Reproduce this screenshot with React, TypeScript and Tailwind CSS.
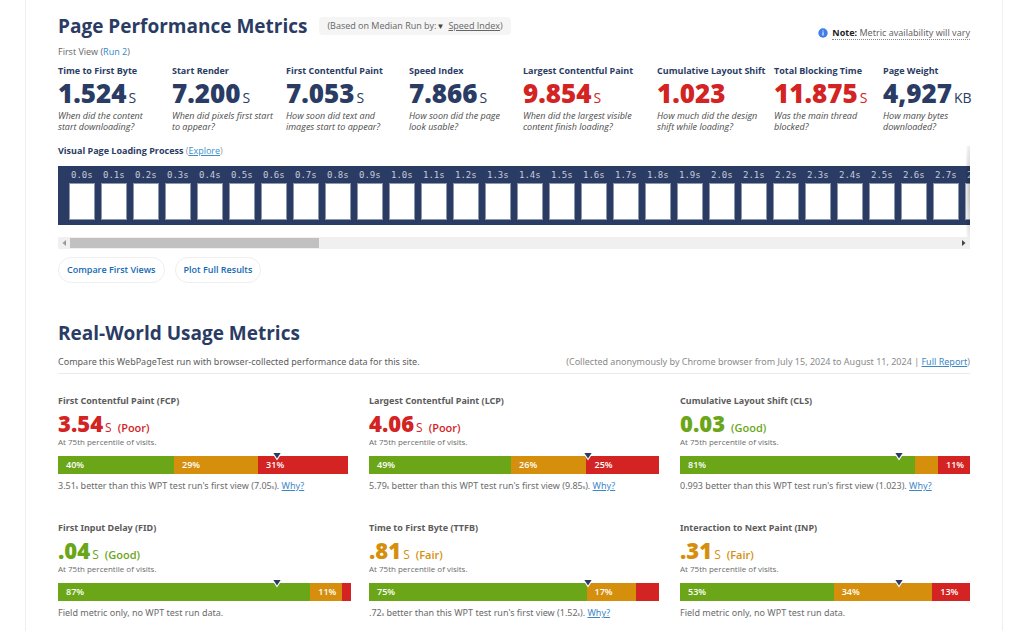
import React from "react";

type Tone = "navy" | "good" | "fair" | "poor";

const toneText: Record<Tone, string> = {
  navy: "text-[#2a3c64]",
  good: "text-[#6aa618]",
  fair: "text-[#d58f0c]",
  poor: "text-[#d32323]",
};

interface Metric {
  label: string;
  value: string;
  unit?: string;
  tone: Tone;
  lines: [string, string];
}

const metrics: Metric[] = [
  { label: "Time to First Byte", value: "1.524", unit: "S", tone: "navy", lines: ["When did the content", "start downloading?"] },
  { label: "Start Render", value: "7.200", unit: "S", tone: "navy", lines: ["When did pixels first start", "to appear?"] },
  { label: "First Contentful Paint", value: "7.053", unit: "S", tone: "navy", lines: ["How soon did text and", "images start to appear?"] },
  { label: "Speed Index", value: "7.866", unit: "S", tone: "navy", lines: ["How soon did the page", "look usable?"] },
  { label: "Largest Contentful Paint", value: "9.854", unit: "S", tone: "poor", lines: ["When did the largest visible", "content finish loading?"] },
  { label: "Cumulative Layout Shift", value: "1.023", tone: "poor", lines: ["How much did the design", "shift while loading?"] },
  { label: "Total Blocking Time", value: "11.875", unit: "S", tone: "poor", lines: ["Was the main thread", "blocked?"] },
  { label: "Page Weight", value: "4,927", unit: "KB", tone: "navy", lines: ["How many bytes", "downloaded?"] },
];

const frames = Array.from({ length: 29 }, (_, i) => `${(i / 10).toFixed(1)}s`);

interface FieldMetric {
  title: string;
  value: string;
  unit?: string;
  rating: string;
  tone: Tone;
  split: [number, number, number];
  compare?: { diff: string; first: string; unit: boolean };
}

const fieldMetrics: FieldMetric[] = [
  { title: "First Contentful Paint (FCP)", value: "3.54", unit: "S", rating: "Poor", tone: "poor", split: [40, 29, 31], compare: { diff: "3.51", first: "7.05", unit: true } },
  { title: "Largest Contentful Paint (LCP)", value: "4.06", unit: "S", rating: "Poor", tone: "poor", split: [49, 26, 25], compare: { diff: "5.79", first: "9.85", unit: true } },
  { title: "Cumulative Layout Shift (CLS)", value: "0.03", rating: "Good", tone: "good", split: [81, 8, 11], compare: { diff: "0.993", first: "1.023", unit: false } },
  { title: "First Input Delay (FID)", value: ".04", unit: "S", rating: "Good", tone: "good", split: [87, 11, 3] },
  { title: "Time to First Byte (TTFB)", value: ".81", unit: "S", rating: "Fair", tone: "fair", split: [75, 17, 8], compare: { diff: ".72", first: "1.52", unit: true } },
  { title: "Interaction to Next Paint (INP)", value: ".31", unit: "S", rating: "Fair", tone: "fair", split: [53, 34, 13] },
];

const segmentColors = ["bg-[#6aa618]", "bg-[#d58f0c]", "bg-[#d32323]"];

function MetricCell({ metric }: { metric: Metric }) {
  return (
    <div className="min-w-0 whitespace-nowrap">
      <h3 className="text-[9px] leading-3 font-bold text-[#2a3c64]">{metric.label}</h3>
      <p className={`mt-0.5 text-[26px] leading-7 font-extrabold ${toneText[metric.tone]}`}>
        {metric.value}
        {metric.unit && <span className="ml-0.5 text-sm leading-none font-medium">{metric.unit}</span>}
      </p>
      <p className="mt-[3px] text-[9px] leading-[11px] text-[#4b4b4b] italic">
        {metric.lines[0]}
        <br />
        {metric.lines[1]}
      </p>
    </div>
  );
}

function FieldCard({ item }: { item: FieldMetric }) {
  const small = <span className="text-[5px]">s</span>;
  return (
    <section className="min-w-0 whitespace-nowrap">
      <h3 className="font-['Noto_Sans',sans-serif] text-[9px] leading-[14px] font-bold text-[#5c5c5c]">{item.title}</h3>
      <p className={`mt-0.5 text-[22px] leading-[26px] font-extrabold ${toneText[item.tone]}`}>
        {item.value}
        {item.unit && <span className="ml-0.5 text-xs leading-none font-medium">{item.unit}</span>}
        <span className="ml-1.5 text-[11px] leading-none font-semibold">({item.rating})</span>
      </p>
      <p className="text-[8px] leading-3 text-[#6b6b6b]">At 75th percentile of visits.</p>
      <div className="relative mt-2 flex h-[18px]">
        {item.split.map((pct, i) => (
          <div
            key={i}
            className={`shrink-0 text-[9px] leading-[18px] font-semibold text-white ${pct > 10 ? "px-2" : ""} ${segmentColors[i]}`}
            style={{ width: `${pct}%` }}
          >
            {pct > 10 ? `${pct}%` : ""}
          </div>
        ))}
        <svg className="absolute -top-[3px] left-3/4 -ml-1 h-2 w-2.5" viewBox="0 0 10 8" aria-hidden="true">
          <path d="M0 0H10L5 7.6Z" fill="#fff" />
          <path d="M1.4 0H8.6L5 5.6Z" fill="#2a3c64" />
        </svg>
      </div>
      <p className="mt-1 font-['Noto_Sans',sans-serif] text-[9px] leading-4 text-[#6b6b6b]">
        {item.compare ? (
          <>
            {item.compare.diff}
            {item.compare.unit && small} better than this WPT test run's first view ({item.compare.first}
            {item.compare.unit && small}).{" "}
            <a href="#why" className="text-[#3b87c8] underline">Why?</a>
          </>
        ) : (
          "Field metric only, no WPT test run data."
        )}
      </p>
    </section>
  );
}

export default function App() {
  return (
    <div className="overflow-hidden bg-white font-['Open_Sans',sans-serif]">
      <main className="mr-[21px] ml-[25px] border-x border-[#efefef] px-8 pt-3.5 pb-3">
        <header className="flex h-6 items-center">
          <h1 className="text-[19px] leading-6 font-bold whitespace-nowrap text-[#2a3c64]">Page Performance Metrics</h1>
          <div className="ml-3 flex h-[18px] items-center rounded bg-[#f5f5f5] px-2 text-[9px] whitespace-nowrap text-[#666]">
            (Based on Median Run by:
            <span className="mr-1 text-[8px] text-[#444]">▼</span>
            <a href="#speed-index" className="underline">Speed Index</a>)
          </div>
          <p className="mt-3.5 ml-auto flex items-center gap-1 font-['Noto_Sans',sans-serif] text-[9px] leading-3 whitespace-nowrap text-[#666]">
            <svg className="h-2.5 w-2.5" viewBox="0 0 10 10" aria-hidden="true">
              <circle cx="5" cy="5" r="4.7" fill="#3f7fe8" />
              <path d="M5 4.3V7.6M5 2.4V3.4" stroke="#fff" strokeWidth="1.1" />
            </svg>
            <span className="border-b border-dotted border-[#888]">
              <strong className="text-[#222]">Note:</strong> Metric availability will vary
            </span>
          </p>
        </header>
        <p className="mt-[7px] text-[9px] leading-[14px] text-[#666]">
          First View (<a href="#run2" className="text-[#2f88cc]">Run 2</a>)
        </p>

        <div className="mt-1.5 grid grid-cols-[minmax(0,114fr)_minmax(0,114fr)_minmax(0,123fr)_minmax(0,114fr)_minmax(0,134fr)_minmax(0,117fr)_minmax(0,109fr)_minmax(0,87fr)]">
          {metrics.map((m) => (
            <MetricCell key={m.label} metric={m} />
          ))}
        </div>

        <h2 className="mt-3 text-[9px] leading-[14px] font-bold text-[#2a3c64]">
          Visual Page Loading Process{" "}
          <span className="font-normal text-[#999]">
            (<a href="#explore" className="text-[#3b8fcc] underline">Explore</a>)
          </span>
        </h2>
        <div className="relative mt-2">
          <div className="overflow-hidden bg-[#2a3c64]">
            <ol className="flex h-[59px] gap-1.5 px-[11px] pt-1">
              {frames.map((t) => (
                <li key={t} className="w-[26px] shrink-0">
                  <p className="pl-0.5 font-['DejaVu_Sans_Mono',monospace] text-[9px] leading-[11px] text-[#c6cbd7]">{t}</p>
                  <div className="mt-0.5 h-[37px] border border-[#8d97ad] bg-white" />
                </li>
              ))}
            </ol>
          </div>
          <div className="absolute -top-5 right-0 -bottom-3 w-1 bg-radial-[at_100%_50%] from-black/25 to-transparent" />
        </div>
        <div className="mt-3 flex h-3 items-center bg-[#f0f0f0] px-1" aria-hidden="true">
          <svg className="h-1.5 w-1" viewBox="0 0 4 6"><path d="M4 0V6L0.5 3Z" fill="#9a9a9a" /></svg>
          <div className="mx-1 h-2.5 flex-1">
            <div className="h-full w-[28%] bg-[#c1c1c1]" />
          </div>
          <svg className="h-1.5 w-1" viewBox="0 0 4 6"><path d="M0 0V6L3.5 3Z" fill="#444" /></svg>
        </div>
        <div className="mt-2 flex gap-2.5 text-[9px] font-semibold text-[#1469b5]">
          <button type="button" className="h-[26px] rounded-full border border-[#eee] px-2">Compare First Views</button>
          <button type="button" className="h-[26px] rounded-full border border-[#eee] px-2">Plot Full Results</button>
        </div>

        <h1 className="mt-9 text-[19px] leading-7 font-bold text-[#2a3c64]">Real-World Usage Metrics</h1>
        <div className="mt-[7px] flex items-center justify-between border-b border-[#ececec] pb-[3px] font-['Noto_Sans',sans-serif] text-[9px] leading-4 whitespace-nowrap">
          <p className="text-[#5c5c5c]">Compare this WebPageTest run with browser-collected performance data for this site.</p>
          <p className="text-[#8a8a8a]">
            (Collected anonymously by Chrome browser from July 15, 2024 to August 11, 2024 |{" "}
            <a href="#report" className="text-[#3b87c8] underline">Full Report</a>)
          </p>
        </div>
        <div className="mt-5 grid grid-cols-3 gap-x-[21px] gap-y-[26px]">
          {fieldMetrics.map((f) => (
            <FieldCard key={f.title} item={f} />
          ))}
        </div>
      </main>
    </div>
  );
}
